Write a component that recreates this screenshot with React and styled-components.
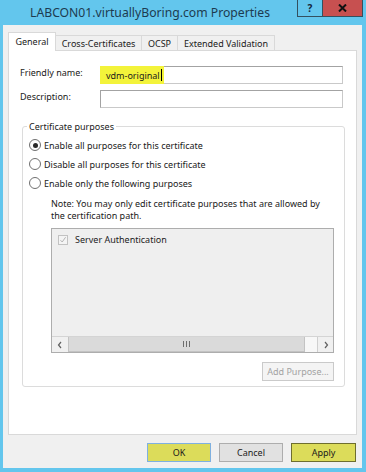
import React from "react";
import styled, { createGlobalStyle } from "styled-components";

const UI_FONT = `"Noto Sans", "Open Sans", "DejaVu Sans", sans-serif`;

const GlobalStyle = createGlobalStyle`
  html, body { margin: 0; padding: 0; }
  body { width: 366px; height: 472px; overflow: hidden; background: #63c6ed; }
  * { box-sizing: border-box; }
`;

const Window = styled.div`
  width: 366px;
  height: 472px;
  background: #63c6ed;
  display: flex;
  flex-direction: column;
  padding: 0 4px 4px 3px;
  font-family: ${UI_FONT};
  font-size: 9px;
  color: #1a1a1a;
`;

const TitleBar = styled.div`
  height: 25px;
  display: flex;
  align-items: flex-start;
  flex-shrink: 0;
`;

const Title = styled.div`
  flex: 1;
  text-align: center;
  line-height: 25px;
  font-size: 12.2px;
  color: #1d3b50;
  white-space: nowrap;
`;

const CaptionButtons = styled.div`
  display: flex;
  margin-right: -1px;
`;

const CaptionButton = styled.div`
  width: ${(p) => p.$w}px;
  height: 17px;
  background: ${(p) => p.$bg};
  border: 1px solid #33505f;
  border-top: none;
  border-left: ${(p) => (p.$joined ? "none" : "1px solid #33505f")};
  display: flex;
  align-items: center;
  justify-content: center;
  font-weight: 700;
  font-size: 10px;
  color: #15253a;
`;

const Client = styled.div`
  flex: 1;
  background: #f0f0f0;
  display: flex;
  flex-direction: column;
  padding: 7px 5px 6px 5px;
  min-height: 0;
`;

const TabRow = styled.div`
  display: flex;
  align-items: flex-end;
  margin-bottom: -1px;
  position: relative;
  z-index: 1;
`;

const Tab = styled.div`
  width: ${(p) => p.$w}px;
  height: ${(p) => (p.$active ? 19 : 16)}px;
  margin-left: ${(p) => (p.$first ? 0 : -1)}px;
  padding-bottom: ${(p) => (p.$active ? 2 : 0)}px;
  background: ${(p) => (p.$active ? "#ffffff" : "#f0f0f0")};
  border: 1px solid #d9d9d9;
  border-bottom: ${(p) => (p.$active ? "none" : "1px solid #d9d9d9")};
  display: flex;
  align-items: center;
  justify-content: center;
  white-space: nowrap;
  position: relative;
  z-index: ${(p) => (p.$active ? 2 : 1)};
`;

const Panel = styled.div`
  flex: 1;
  background: #ffffff;
  border: 1px solid #d9d9d9;
  padding: 15px 13px 0 11px;
  display: flex;
  flex-direction: column;
`;

const FieldGrid = styled.div`
  display: grid;
  grid-template-columns: 80px 1fr;
  row-gap: 6px;
  align-items: center;
`;

const FieldLabel = styled.label`
  white-space: nowrap;
  align-self: start;
  line-height: 14px;
`;

const TextBox = styled.div`
  height: 18px;
  border: 1px solid #a3a3a3;
  border-right-color: #c9c9c9;
  border-bottom-color: #c9c9c9;
  background: #ffffff;
  display: flex;
  align-items: stretch;
`;

const Highlight = styled.span`
  background: #f3f33a;
  display: flex;
  align-items: center;
  padding: 0 2px 0 6px;
  margin: -1px 0 -1px -1px;
`;

const Caret = styled.span`
  width: 1px;
  height: 12px;
  background: #000;
  margin-left: 1px;
`;

const GroupBox = styled.fieldset`
  margin: 12px -2px 0 2px;
  border: 1px solid #dcdcdc;
  border-radius: 3px;
  padding: 0 10px 5px 6px;
  min-width: 0;
  display: flex;
  flex-direction: column;
`;

const Legend = styled.legend`
  margin-left: -2px;
  padding: 0 2px;
  line-height: 13px;
`;

const RadioList = styled.div`
  display: flex;
  flex-direction: column;
  gap: 3px;
  margin-top: 4px;
`;

const RadioRow = styled.div`
  display: flex;
  align-items: center;
  gap: 3px;
  height: 16px;
`;

const Radio = styled.span`
  width: 12px;
  height: 12px;
  border-radius: 50%;
  border: 1px solid #707070;
  background: #fff;
  display: flex;
  align-items: center;
  justify-content: center;
  flex-shrink: 0;
  &::after {
    content: "";
    width: 5px;
    height: 5px;
    border-radius: 50%;
    background: ${(p) => (p.$checked ? "#2a2a2a" : "transparent")};
  }
`;

const Note = styled.p`
  margin: 7px 0 0 22px;
  line-height: 12px;
`;

const ListBox = styled.div`
  margin: 6px 0 0 22px;
  height: 125px;
  border: 1px solid #adadad;
  background: #efefef;
  display: flex;
  flex-direction: column;
`;

const ListItems = styled.div`
  flex: 1;
  padding: 5px 0 0 6px;
`;

const ListItem = styled.div`
  display: flex;
  align-items: center;
  gap: 7px;
  height: 11px;
  color: #222;
`;

const CheckBox = styled.span`
  width: 10px;
  height: 10px;
  border: 1px solid #c2c2c2;
  background: #f4f4f4;
  display: flex;
  align-items: center;
  justify-content: center;
`;

const HScroll = styled.div`
  height: 16px;
  display: flex;
  background: #f7f7f7;
  border-top: 1px solid #d4d4d4;
`;

const ScrollArrow = styled.div`
  width: 16px;
  display: flex;
  align-items: center;
  justify-content: center;
  background: #f0f0f0;
  border-left: ${(p) => (p.$right ? "1px solid #cfcfcf" : "none")};
`;

const ScrollTrack = styled.div`
  flex: 1;
  display: flex;
`;

const Thumb = styled.div`
  width: ${(p) => p.$pct}%;
  background: #dadada;
  border: 1px solid #c3c3c3;
  border-top: none;
  display: flex;
  align-items: center;
  justify-content: center;
  gap: 2px;
`;

const Grip = styled.span`
  width: 1px;
  height: 6px;
  background: #6d6d6d;
`;

const SmallButton = styled.div`
  align-self: flex-end;
  margin-top: 9px;
  width: 72px;
  height: 19px;
  border: 1px solid #cacaca;
  background: #f4f4f4;
  color: #a2a2a2;
  display: flex;
  align-items: center;
  justify-content: center;
  white-space: nowrap;
`;

const Footer = styled.div`
  display: flex;
  justify-content: flex-end;
  gap: 8px;
  margin-top: 8px;
  padding-right: 1px;
`;

const DialogButton = styled.div`
  width: ${(p) => p.$w}px;
  height: 19px;
  border: 1px solid ${(p) => p.$border};
  background: ${(p) => p.$bg};
  display: flex;
  align-items: center;
  justify-content: center;
  color: #1a1a1a;
`;

const tabs = [
  { label: "General", w: 48, active: true },
  { label: "Cross-Certificates", w: 87 },
  { label: "OCSP", w: 37 },
  { label: "Extended Validation", w: 98 },
];

const radios = [
  { label: "Enable all purposes for this certificate", checked: true },
  { label: "Disable all purposes for this certificate" },
  { label: "Enable only the following purposes" },
];

export default function App() {
  return (
    <>
      <GlobalStyle />
      <Window>
        <TitleBar>
          <Title>LABCON01.virtuallyBoring.com Properties</Title>
          <CaptionButtons>
            <CaptionButton $w={26} $bg="#63c6ed">?</CaptionButton>
            <CaptionButton $w={40} $bg="#c75050" $joined>
              <svg width="9" height="8" viewBox="0 0 9 8">
                <path d="M1 0.5 L8 7.5 M8 0.5 L1 7.5" stroke="#111" strokeWidth="2" />
              </svg>
            </CaptionButton>
          </CaptionButtons>
        </TitleBar>
        <Client>
          <TabRow>
            {tabs.map((t, i) => (
              <Tab key={t.label} $w={t.w} $active={t.active} $first={i === 0}>
                {t.label}
              </Tab>
            ))}
          </TabRow>
          <Panel>
            <FieldGrid>
              <FieldLabel>Friendly name:</FieldLabel>
              <TextBox>
                <Highlight>
                  vdm-original
                  <Caret />
                </Highlight>
              </TextBox>
              <FieldLabel>Description:</FieldLabel>
              <TextBox />
            </FieldGrid>
            <GroupBox>
              <Legend>Certificate purposes</Legend>
              <RadioList>
                {radios.map((r) => (
                  <RadioRow key={r.label}>
                    <Radio $checked={r.checked} />
                    <span>{r.label}</span>
                  </RadioRow>
                ))}
              </RadioList>
              <Note>
                Note: You may only edit certificate purposes that are allowed by
                <br />
                the certification path.
              </Note>
              <ListBox>
                <ListItems>
                  <ListItem>
                    <CheckBox>
                      <svg width="8" height="8" viewBox="0 0 8 8">
                        <path d="M1.5 4.2 L3.2 6 L6.6 1.2" stroke="#b5b5b5" strokeWidth="1" fill="none" />
                      </svg>
                    </CheckBox>
                    <span>Server Authentication</span>
                  </ListItem>
                </ListItems>
                <HScroll>
                  <ScrollArrow>
                    <svg width="6" height="8" viewBox="0 0 6 8">
                      <path d="M4 1 L1.5 4 L4 7" stroke="#606060" strokeWidth="1.2" fill="none" />
                    </svg>
                  </ScrollArrow>
                  <ScrollTrack>
                    <Thumb $pct={95}>
                      <Grip />
                      <Grip />
                      <Grip />
                    </Thumb>
                  </ScrollTrack>
                  <ScrollArrow $right>
                    <svg width="6" height="8" viewBox="0 0 6 8">
                      <path d="M2 1 L4.5 4 L2 7" stroke="#606060" strokeWidth="1.2" fill="none" />
                    </svg>
                  </ScrollArrow>
                </HScroll>
              </ListBox>
              <SmallButton>Add Purpose...</SmallButton>
            </GroupBox>
          </Panel>
          <Footer>
            <DialogButton $w={64} $bg="#dcdc5a" $border="#7fb0e0">OK</DialogButton>
            <DialogButton $w={64} $bg="#e1e1e1" $border="#adadad">Cancel</DialogButton>
            <DialogButton $w={65} $bg="#dcdc5a" $border="#6e6e2e">Apply</DialogButton>
          </Footer>
        </Client>
      </Window>
    </>
  );
}
